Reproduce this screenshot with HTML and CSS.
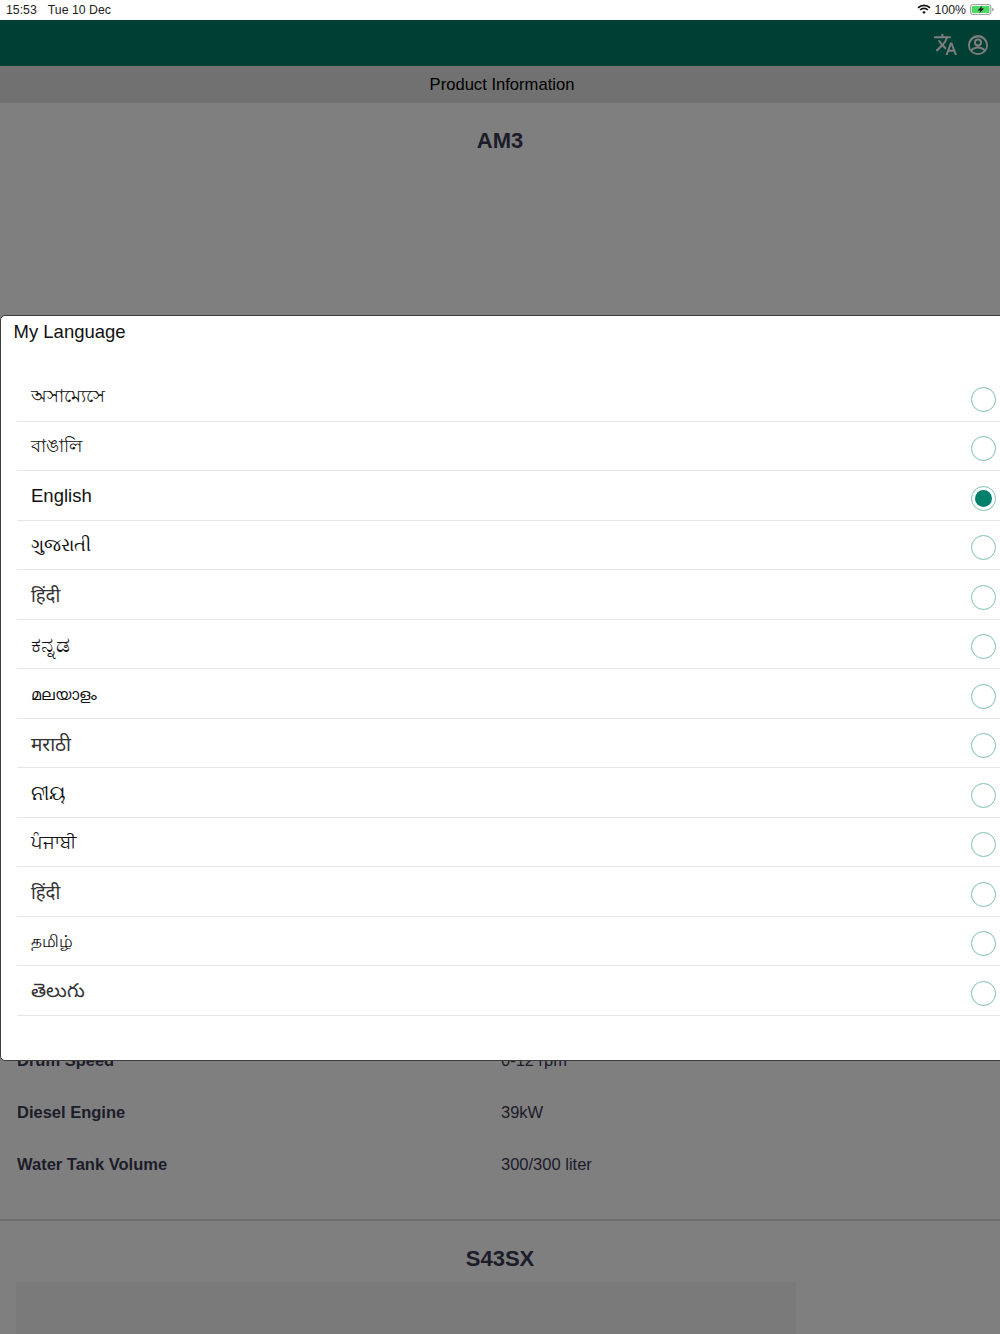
FILE: index.html
```html
<!DOCTYPE html>
<html lang="en">
<head>
<meta charset="utf-8">
<title>Product Information</title>
<link rel="stylesheet" href="styles.css">
</head>
<body>
<div class="status">
  <div class="status-left"><span>15:53</span><span>Tue 10 Dec</span></div>
  <div class="status-right">
    <svg class="wifi" viewBox="0 0 16 12" width="14" height="11"><path d="M8 11.2 5.900 8.900a3 3 0 0 1 4.200 0z" fill="#111"/><path d="M3.600 6.600a6.200 6.200 0 0 1 8.800 0M1.200 4.100a9.600 9.600 0 0 1 13.600 0" fill="none" stroke="#111" stroke-width="1.900"/></svg>
    <span>100%</span>
    <svg class="battery" viewBox="0 0 27 12" width="24" height="11"><rect x=".5" y=".5" width="23" height="11" rx="2.500" fill="none" stroke="#888"/><rect x="2" y="2" width="20" height="8" rx="1.200" fill="#4cd964"/><path d="M25 4v4c1-.3 1.600-1 1.600-2s-.6-1.700-1.600-2z" fill="#888"/><path d="M14 1.500 8.500 7h3.300l-1.500 3.500L15.800 5h-3.300z" fill="#111"/></svg>
  </div>
</div>
<div class="app">
  <header class="topbar">
    <svg class="top-icon" viewBox="0 0 24 24" width="25" height="25"><path fill="#fff" d="m12.870 15.070-2.540-2.510.03-.03A17.520 17.520 0 0 0 14.070 6H17V4h-7V2H8v2H1v1.990h11.170C11.500 7.920 10.440 9.750 9 11.350 8.070 10.320 7.300 9.190 6.690 8h-2c.73 1.630 1.730 3.170 2.980 4.560l-5.090 5.020L4 19l5-5 3.110 3.110zM18.500 10h-2L12 22h2l1.120-3h4.750L21 22h2zm-2.620 7 1.620-4.330L19.120 17z"/></svg>
    <svg class="top-icon" viewBox="0 0 24 24" width="24" height="24"><path fill="#fff" d="M12 2a10 10 0 1 0 0 20 10 10 0 0 0 0-20zm0 18.100c-2.200 0-4.200-.9-5.600-2.200.4-1.500 3.600-2.500 5.600-2.500s5.200 1 5.600 2.500a8.100 8.100 0 0 1-5.600 2.200zm7.100-3.700c-1.400-2-5-2.900-7.100-2.900s-5.700.9-7.100 2.900A8.100 8.100 0 1 1 19.100 16.400zM12 5.500a4 4 0 1 0 0 8 4 4 0 0 0 0-8zm0 6.100a2.100 2.100 0 1 1 0-4.200 2.100 2.100 0 0 1 0 4.200z"/></svg>
  </header>
  <div class="subbar">Product Information</div>
  <main class="content">
    <section class="product">
      <h2>AM3</h2>
      <div class="spec-hidden"></div>
      <dl class="specs">
        <div class="spec"><dt>Drum Speed</dt><dd>0-12 rpm</dd></div>
        <div class="spec"><dt>Diesel Engine</dt><dd>39kW</dd></div>
        <div class="spec"><dt>Water Tank Volume</dt><dd>300/300 liter</dd></div>
      </dl>
    </section>
    <section class="product next">
      <h2>S43SX</h2>
      <div class="picture"></div>
    </section>
  </main>
  <div class="scrim"></div>
  <div class="dialog">
    <h3>My Language</h3>
    <ul class="languages">
      <li><span class="as">অসাম্যেসে</span><i class="radio"></i></li>
      <li><span class="bn">বাঙালি</span><i class="radio"></i></li>
      <li><span>English</span><i class="radio on"></i></li>
      <li><span class="gu">ગુજરાતી</span><i class="radio"></i></li>
      <li><span class="hi">हिंदी</span><i class="radio"></i></li>
      <li><span class="kn">ಕನ್ನಡ</span><i class="radio"></i></li>
      <li><span class="ml">മലയാളം</span><i class="radio"></i></li>
      <li><span class="mr">मराठी</span><i class="radio"></i></li>
      <li><span class="or">ନୀୟ</span><i class="radio"></i></li>
      <li><span class="pa">ਪੰਜਾਬੀ</span><i class="radio"></i></li>
      <li><span class="hi">हिंदी</span><i class="radio"></i></li>
      <li><span class="ta">தமிழ்</span><i class="radio"></i></li>
      <li><span class="te">తెలుగు</span><i class="radio"></i></li>
    </ul>
  </div>
</div>
</body>
</html>
```

FILE: styles.css
```css
* { box-sizing: border-box; }
html, body { margin: 0; height: 100%; overflow: hidden; }
body {
  font-family: "Liberation Sans", "Noto Sans", "DejaVu Sans", "Noto Sans CJK SC", sans-serif;
  background: #fff;
  color: #000;
}
.status {
  height: 20px;
  display: flex;
  justify-content: space-between;
  align-items: center;
  padding: 0 6px 1px 6px;
  font-size: 12.300px;
  color: #222;
}
.status-left { display: flex; gap: 11px; }
.status-right { display: flex; align-items: center; gap: 4px; }
.app { position: relative; height: 1314px; overflow: hidden; }
.topbar {
  height: 46px;
  background: #007e69;
  display: flex;
  justify-content: flex-end;
  align-items: center;
  gap: 8px;
  padding: 3px 10px 0 0;
}
.subbar {
  height: 36.500px;
  background: #e2e2e2;
  color: #000;
  display: flex;
  align-items: center;
  justify-content: center;
  padding: 2px 0 0 4px;
  font-size: 16.600px;
}
.content { color: #3a3a55; }
.product h2 {
  margin: 0;
  padding-top: 25px;
  height: 78.500px;
  font-size: 22px;
  line-height: 26px;
  text-align: center;
}
.spec-hidden { height: 853px; }
.specs { margin: 0; padding: 0 0 29px 17px; }
.spec { display: flex; height: 52px; align-items: center; font-size: 16.500px; }
.spec dt { width: 484px; font-weight: 700; }
.spec dd { margin: 0; }
.next { border-top: 2px solid #d8d8d8; }
.next h2 { padding-top: 25px; height: 61px; }
.picture { margin-left: 16px; width: 780px; height: 200px; background: #f5f5f5; }
.scrim { position: absolute; inset: 0; background: rgba(0, 0, 0, .5); }
.dialog {
  position: absolute;
  left: 0;
  top: 295px;
  width: 1010px;
  height: 745.500px;
  background: #fff;
  border: 1px solid #3c3c3c;
  border-radius: 5px;
  padding: 5px 0 0 12.500px;
}
.dialog h3 { margin: 0; font-size: 18.500px; font-weight: 400; line-height: 22px; color: #111; }
.languages { list-style: none; margin: 29px 0 0 3.500px; padding: 0; }
.languages li {
  height: 49.500px;
  display: flex;
  align-items: center;
  justify-content: space-between;
  padding: 0 13px 0 14px;
  border-bottom: 1px solid #e6e6e6;
  font-size: 18.500px;
  color: #111;
}
.languages span { padding-top: 2px; }
.languages .as { font-size: 17.500px; padding-top: 3px; }
.languages .bn { font-size: 18.400px; padding-top: 3px; }
.languages .gu { font-size: 18px; }
.languages .hi { padding-top: 0; color: #333; }
.languages .kn { font-size: 22px; }
.languages .ml { font-size: 16.400px; }
.languages .mr { font-size: 19px; color: #333; }
.languages .or { font-size: 19.700px; }
.languages .pa { font-size: 17.600px; }
.languages .ta { font-size: 16.800px; padding-top: 3px; }
.languages .te { font-size: 19.400px; padding-top: 5px; color: #333; }
.radio {
  width: 25px;
  height: 25px;
  border: 1px solid #7fc0b3;
  border-radius: 50%;
  margin-top: 6px;
  display: flex;
  align-items: center;
  justify-content: center;
}
.on::after {
  content: "";
  width: 17px;
  height: 17px;
  border-radius: 50%;
  background: #00806a;
}
```
